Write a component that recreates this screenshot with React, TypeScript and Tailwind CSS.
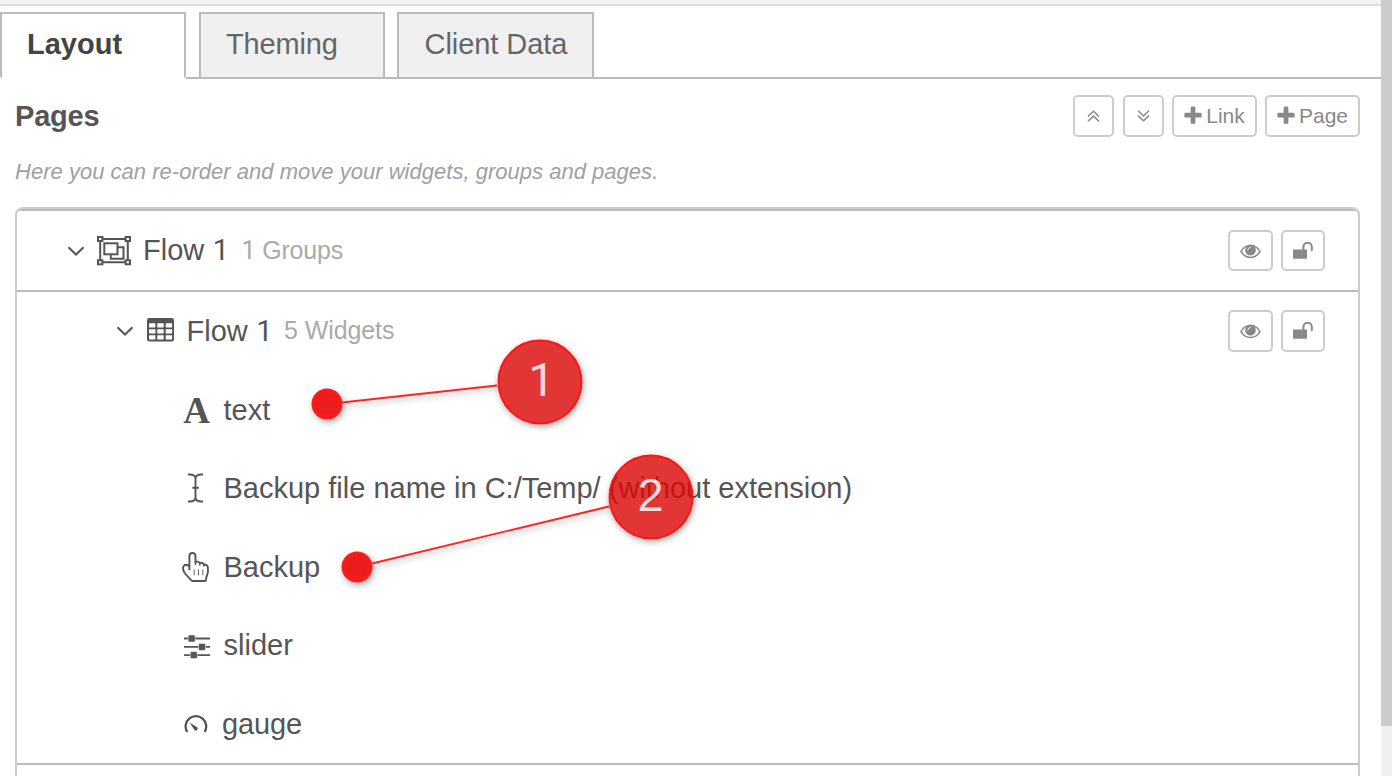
import type { ReactNode } from "react";

const PlusIcon = () => (
  <svg className="mt-[1px] -ml-[2px] h-[22px] w-[22px] shrink-0" viewBox="0 0 1792 1792" fill="currentColor">
    <path d="M1600 736v192q0 40-28 68t-68 28h-416v416q0 40-28 68t-68 28h-192q-40 0-68-28t-28-68v-416h-416q-40 0-68-28t-28-68v-192q0-40 28-68t68-28h416v-416q0-40 28-68t68-28h192q40 0 68 28t28 68v416h416q40 0 68 28t28 68z" />
  </svg>
);

const DoubleAngle = ({ up = false }: { up?: boolean }) => (
  <svg className="-mt-px h-[14px] w-[14px]" viewBox="0 0 14 14" fill="none" stroke="currentColor" strokeWidth="1.5">
    {up ? <path d="M1 7.500 6.500 2.300 12 7.500M1 12.300 6.500 7.100 12 12.300" /> : <path d="M1 1.800 6.500 7 12 1.800M1 6.600 6.500 11.800 12 6.600" />}
  </svg>
);

const EyeIcon = () => (
  <svg className="mt-px h-[15px] w-[21px]" viewBox="0 0 21 15">
    <path d="M.9 7.600Q4.800 1.300 10.500 1.300T20.100 7.600Q16.200 13.500 10.500 13.500T.9 7.600z" fill="none" stroke="#888" strokeWidth="1.500" />
    <circle cx="10.500" cy="6.200" r="5.300" fill="#888" />
    <path d="M7.700 5.900a2.900 2.900 0 0 1 2.600-2.600" fill="none" stroke="#fff" strokeWidth="1" strokeLinecap="round" />
  </svg>
);

const UnlockIcon = () => (
  <svg className="h-[18px] w-[20px]" viewBox="0 0 20 18">
    <rect x="0" y="7.600" width="14" height="9.200" rx="1" fill="#888" />
    <path d="M10.400 8V5a4.200 4.200 0 0 1 8.400 0V8.300" fill="none" stroke="#888" strokeWidth="2" strokeLinecap="round" />
  </svg>
);

const Chevron = () => (
  <svg className="h-[10px] w-[18px] shrink-0" viewBox="0 0 18 10" fill="none" stroke="currentColor" strokeWidth="2">
    <path d="M1.500 1.200 9 8.500l7.500-7.300" />
  </svg>
);

const ObjectGroupIcon = () => (
  <svg className="h-[30px] w-[34px] shrink-0" viewBox="0 0 34 30" fill="none" stroke="currentColor" strokeWidth="2">
    <path d="M6 3.100h22M6 26.300h22M3.200 6v18M30.800 6v18" />
    <rect x="1" y="1" width="4.400" height="4" />
    <rect x="28.600" y="1" width="4.400" height="4" />
    <rect x="1" y="24.300" width="4.400" height="4" />
    <rect x="28.600" y="24.300" width="4.400" height="4" />
    <rect x="7.300" y="7.300" width="13.200" height="11" />
    <path d="M20.500 11.200h6v11.500H13.800v-4" />
  </svg>
);

const TableIcon = () => (
  <svg className="-mt-[2px] h-[24px] w-[27px] shrink-0" viewBox="0 0 27 24">
    <rect width="27" height="23.500" rx="2.200" fill="currentColor" />
    {[5.3, 11.3, 17.3].map((y) => [2, 10.3, 18.7].map((x) => (
      <rect key={x + "-" + y} x={x} y={y} width="6.400" height="4.200" rx=".4" fill="#fff" />
    )))}
  </svg>
);

const CursorIcon = () => (
  <svg className="mr-px h-[30px] w-[15px]" viewBox="0 0 15 30" fill="none" stroke="currentColor" strokeWidth="1.900">
    <path d="M0 1.500h1.500q6 0 6 4v19q0 4-6 4H0M15 1.500h-1.500q-6 0-6 4v19q0 4 6 4H15M4.300 14.800h6.500" />
  </svg>
);

const HandIcon = () => (
  <svg className="mr-[2px] h-[30px] w-[27px]" viewBox="0 0 27 30" fill="none" stroke="currentColor" strokeWidth="1.900" strokeLinejoin="round">
    <path d="M7.400 18.300V4.300C7.400 2.400 8.600 1 10.500 1s3 1.400 3 3.300v6c.7-1 3.800-1 4.300.8 1.500-.8 3.400-.2 4 1.400 2.300-.3 4.100 1 4.100 3.400v3.800c0 2.900-1.900 4.400-1.900 8.300 0 .6-.4 1-1 1H10.600c-.7 0-1-.4-1.400-.8-2-2-4.600-4.900-6.500-7.200C1.700 19.700 1 17.600 1 16.300c0-2.100 1.300-3.500 3-3.500 1.600 0 2.600.9 3.400 2" />
    <path d="M13.500 10.300v2.700M17.800 11.300v2.300M21.800 12.500v2" strokeWidth="1.500" />
    <path d="M12.200 17.500v5.800M16.500 17.500v5.800M20.800 17.500v5.800" strokeWidth=".9" />
  </svg>
);

const SliderIcon = () => (
  <svg className="mt-[3px] ml-[2px] h-[24px] w-[26px]" viewBox="0 0 26 24" fill="currentColor">
    <path d="M0 2.600h26v1.900H0zM0 10.900h26v1.900H0zM0 19.200h26v1.900H0z" />
    <g stroke="#fff" strokeWidth=".5">
      <rect x="4.200" y="0" width="7" height="7" rx="1.300" />
      <rect x="14.500" y="8.400" width="7" height="7" rx="1.300" />
      <rect x="6.300" y="16.600" width="7" height="7" rx="1.300" />
    </g>
  </svg>
);

const GaugeIcon = () => (
  <svg className="mr-px h-[20px] w-[24px]" viewBox="0 0 24 20">
    <path d="M3.200 18A10.300 10.300 0 1 1 20.600 18" fill="none" stroke="currentColor" strokeWidth="2.300" />
    <path d="m5.600 8.600 7.500 4.600a1.900 1.900 0 1 1-2.700 2.700z" fill="currentColor" />
  </svg>
);

const One = () => <span className="ml-[0.5px] font-[Roboto,sans-serif]">1</span>;

const Btn = ({ className, children }: { className: string; children: ReactNode }) => (
  <button className={`flex items-center justify-center rounded-[5px] border-2 border-[#ccc] bg-white text-[21px] leading-none text-[#888] ${className}`}>
    {children}
  </button>
);

const RowButtons = ({ height }: { height: string }) => (
  <div className="ml-auto flex gap-2 pr-[33px]">
    <Btn className={`w-[45px] ${height}`}><EyeIcon /></Btn>
    <Btn className={`w-[44px] ${height}`}><UnlockIcon /></Btn>
  </div>
);

const widgets = [
  {
    name: "text",
    gap: "ml-[12.5px] pt-[2px]",
    icon: <span className="mt-px ml-px font-['Liberation_Serif',serif] text-[37px] leading-none font-bold">A</span>,
  },
  { name: "Backup file name in C:/Temp/ (without extension)", gap: "ml-[12.5px]", icon: <CursorIcon /> },
  { name: "Backup", gap: "ml-[12.5px] pt-[2px]", icon: <HandIcon /> },
  { name: "slider", gap: "ml-[12.5px]", icon: <SliderIcon /> },
  { name: "gauge", gap: "ml-[11px] pt-[2px] tracking-[-0.1px]", icon: <GaugeIcon /> },
];

const Callouts = () => (
  <svg className="pointer-events-none absolute inset-0 h-[776px] w-[1392px]" viewBox="0 0 1392 776">
    <defs>
      <filter id="shadow" x="-30%" y="-30%" width="160%" height="170%">
        <feDropShadow dx="1.500" dy="2.500" stdDeviation="3" floodColor="#000" floodOpacity=".34" />
      </filter>
      <filter id="outer-shadow" x="-30%" y="-30%" width="160%" height="170%" colorInterpolationFilters="sRGB">
        <feGaussianBlur in="SourceAlpha" stdDeviation="3" />
        <feOffset dx="1" dy="2" />
        <feComponentTransfer><feFuncA type="linear" slope=".4" /></feComponentTransfer>
        <feComposite in2="SourceAlpha" operator="out" result="halo" />
        <feMerge>
          <feMergeNode in="halo" />
          <feMergeNode in="SourceGraphic" />
        </feMerge>
      </filter>
      <radialGradient id="dot">
        <stop offset="0" stopColor="#e91b1b" />
        <stop offset=".65" stopColor="#ec1c1c" />
        <stop offset="1" stopColor="#fb2020" />
      </radialGradient>
    </defs>
    <g filter="url(#shadow)">
      <path d="M342 402.500 497 385.500M372 563.500 609 506.500" stroke="#fa2727" strokeWidth="1.900" />
      <circle cx="327" cy="404" r="15.500" fill="url(#dot)" />
      <circle cx="357" cy="567" r="15.500" fill="url(#dot)" />
    </g>
    {[
      { n: "1", x: 540, y: 382, tx: 541.5, font: "font-[Roboto,sans-serif]" },
      { n: "2", x: 651, y: 497, tx: 650.5, font: "font-['Liberation_Sans',Arial,sans-serif]" },
    ].map(({ n, x, y, tx, font }) => (
      <g key={n}>
        <g filter="url(#outer-shadow)">
          <circle cx={x} cy={y} r="41.500" fill="#de0606" fillOpacity=".8" stroke="#fb1414" strokeWidth="2" />
        </g>
        <text x={tx} y={y + 14} textAnchor="middle" fontSize="47" fill="#fadada" className={font}>{n}</text>
      </g>
    ))}
  </svg>
);

export default function App() {
  return (
    <div className="relative flex h-[776px] w-[1392px] overflow-hidden bg-white font-['Liberation_Sans',Arial,sans-serif] text-[29px] leading-none text-[#555]">
      <main className="flex h-full w-[1381px] flex-col">
        <div className="h-[6px] shrink-0 border-b-2 border-[#ddd] bg-[#f3f3f3]" />
        <nav className="mt-[6px] flex h-[67px] shrink-0">
          <div className="h-[66px] w-[186px] rounded-b-[2px] border-2 border-b-0 border-[#bbb] pt-[16px] pl-[25px] font-bold text-[#444]">Layout</div>
          <div className="h-[67px] w-[13px] border-b-2 border-[#bbb]" />
          <div className="h-[67px] w-[186px] border-2 border-[#bbb] bg-[#f0f0f0] pt-[16px] pl-[25px] tracking-[-0.15px] text-[#666]">Theming</div>
          <div className="h-[67px] w-[12px] border-b-2 border-[#bbb]" />
          <div className="h-[67px] w-[197px] border-2 border-[#bbb] bg-[#f0f0f0] pt-[16px] pl-[25.5px] tracking-[-0.05px] text-[#666]">Client Data</div>
          <div className="h-[67px] grow border-b-2 border-[#bbb]" />
        </nav>
        <header className="mt-4 flex h-[42px] shrink-0 items-center pr-[21px] pl-[15px]">
          <h1 className="font-bold tracking-[-0.2px]">Pages</h1>
          <div className="ml-auto flex">
            <Btn className="mr-[9px] h-[42px] w-[41px]"><DoubleAngle up /></Btn>
            <Btn className="mr-2 h-[42px] w-[41px]"><DoubleAngle /></Btn>
            <Btn className="mr-2 h-[42px] w-[85px] gap-[2px] pb-[2px]"><PlusIcon />Link</Btn>
            <Btn className="h-[42px] w-[95px] gap-[2px] pb-[2px]"><PlusIcon />Page</Btn>
          </div>
        </header>
        <p className="mt-[24px] ml-[15px] h-[22px] shrink-0 text-[22px] leading-[22px] tracking-[0.02px] text-[#a0a0a0] italic">
          Here you can re-order and move your widgets, groups and pages.
        </p>
        <section className="mt-[24px] mr-[21px] ml-[15px] h-[600px] shrink-0 overflow-hidden rounded-t-[8px] border-2 border-[#ccc]">
          <div className="flex h-[83px] items-center border-y-2 border-[#bbb] pl-[50px]">
            <Chevron />
            <span className="ml-[12px] flex"><ObjectGroupIcon /></span>
            <span className="ml-[12px]">Flow <One /></span>
            <span className="ml-[12px] text-[25px] tracking-[-0.2px] text-[#aaa]"><One /> Groups</span>
            <RowButtons height="h-[41px]" />
          </div>
          <div className="border-b-2 border-[#bbb]">
            <div className="flex h-[78.5px] items-center pl-[99px]">
              <Chevron />
              <span className="ml-[13px] flex"><TableIcon /></span>
              <span className="ml-[12.5px]">Flow <One /></span>
              <span className="-mt-px ml-[11.5px] text-[25px] tracking-[-0.1px] text-[#aaa]">5 Widgets</span>
              <RowButtons height="h-[42px]" />
            </div>
            {widgets.map((w) => (
              <div key={w.name} className="flex h-[78.5px] items-center pl-[164px]">
                <span className="flex w-[30px] justify-center">{w.icon}</span>
                <span className={w.gap}>{w.name}</span>
              </div>
            ))}
          </div>
        </section>
      </main>
      <div className="h-full w-[11px] bg-[#f0f0f0]">
        <div className="h-[726px] bg-[#ccc]" />
      </div>
      <Callouts />
    </div>
  );
}
